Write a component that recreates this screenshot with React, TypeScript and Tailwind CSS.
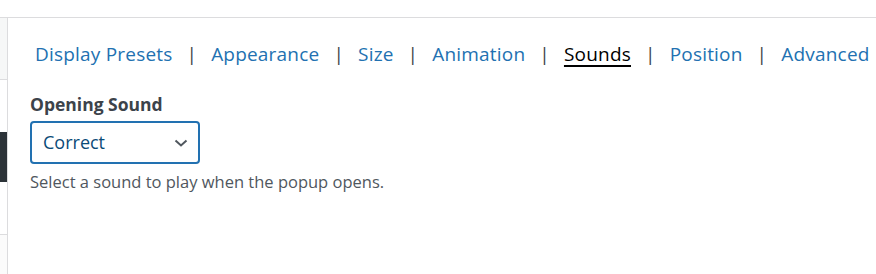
import React from "react";

const tabs = ["Display Presets", "Appearance", "Size", "Animation", "Sounds", "Position", "Advanced"];

export default function App() {
  return (
    <div
      className="w-[876px] h-[274px] bg-white overflow-hidden flex flex-col"
      style={{ fontFamily: '"Open Sans", "Noto Sans", sans-serif' }}
    >
      <div className="h-[18px] shrink-0 border-b border-[#dcdcde]" />
      <div className="flex flex-1">
        <div className="w-[8px] shrink-0 border-r border-[#dcdcde] flex flex-col">
          <div className="h-[62px] bg-[#f6f7f7] border-b border-[#dcdcde]" />
          <div className="h-[52px]" />
          <div className="h-[50px] bg-[#2c3338]" />
          <div className="h-[53px] border-b border-[#dcdcde]" />
          <div className="flex-1 bg-[#fbfbfb]" />
        </div>
        <div className="flex-1 pl-[22px] pt-[22px]">
          <div className="flex items-center pl-[5px] text-[19px] leading-[28px] tracking-[0.2px] text-[#2271b1] whitespace-nowrap">
            {tabs.map((t, i) => (
              <React.Fragment key={t}>
                {i > 0 && <span className="text-[#3c434a] px-[14px]">|</span>}
                {t === "Sounds" ? (
                  <span className="text-black underline decoration-2 underline-offset-[4px]">{t}</span>
                ) : (
                  <span>{t}</span>
                )}
              </React.Fragment>
            ))}
          </div>
          <div className="mt-[24px] text-[17.5px] leading-[24px] font-bold text-[#3c434a]">Opening Sound</div>
          <div className="mt-[5px] w-[170px] h-[43px] border-2 border-[#2271b1] rounded-[4px] flex items-center justify-between pl-[11px] pr-[9px]">
            <span className="text-[18px] text-[#0a4b78]">Correct</span>
            <svg width="16" height="16" viewBox="0 0 16 16" fill="none">
              <path d="M2.5 5.5 L8 10.5 L13.5 5.5" stroke="#50575e" strokeWidth="2" />
            </svg>
          </div>
          <div className="mt-[7px] text-[16.5px] leading-[22px] text-[#50575e]">Select a sound to play when the popup opens.</div>
        </div>
      </div>
    </div>
  );
}
